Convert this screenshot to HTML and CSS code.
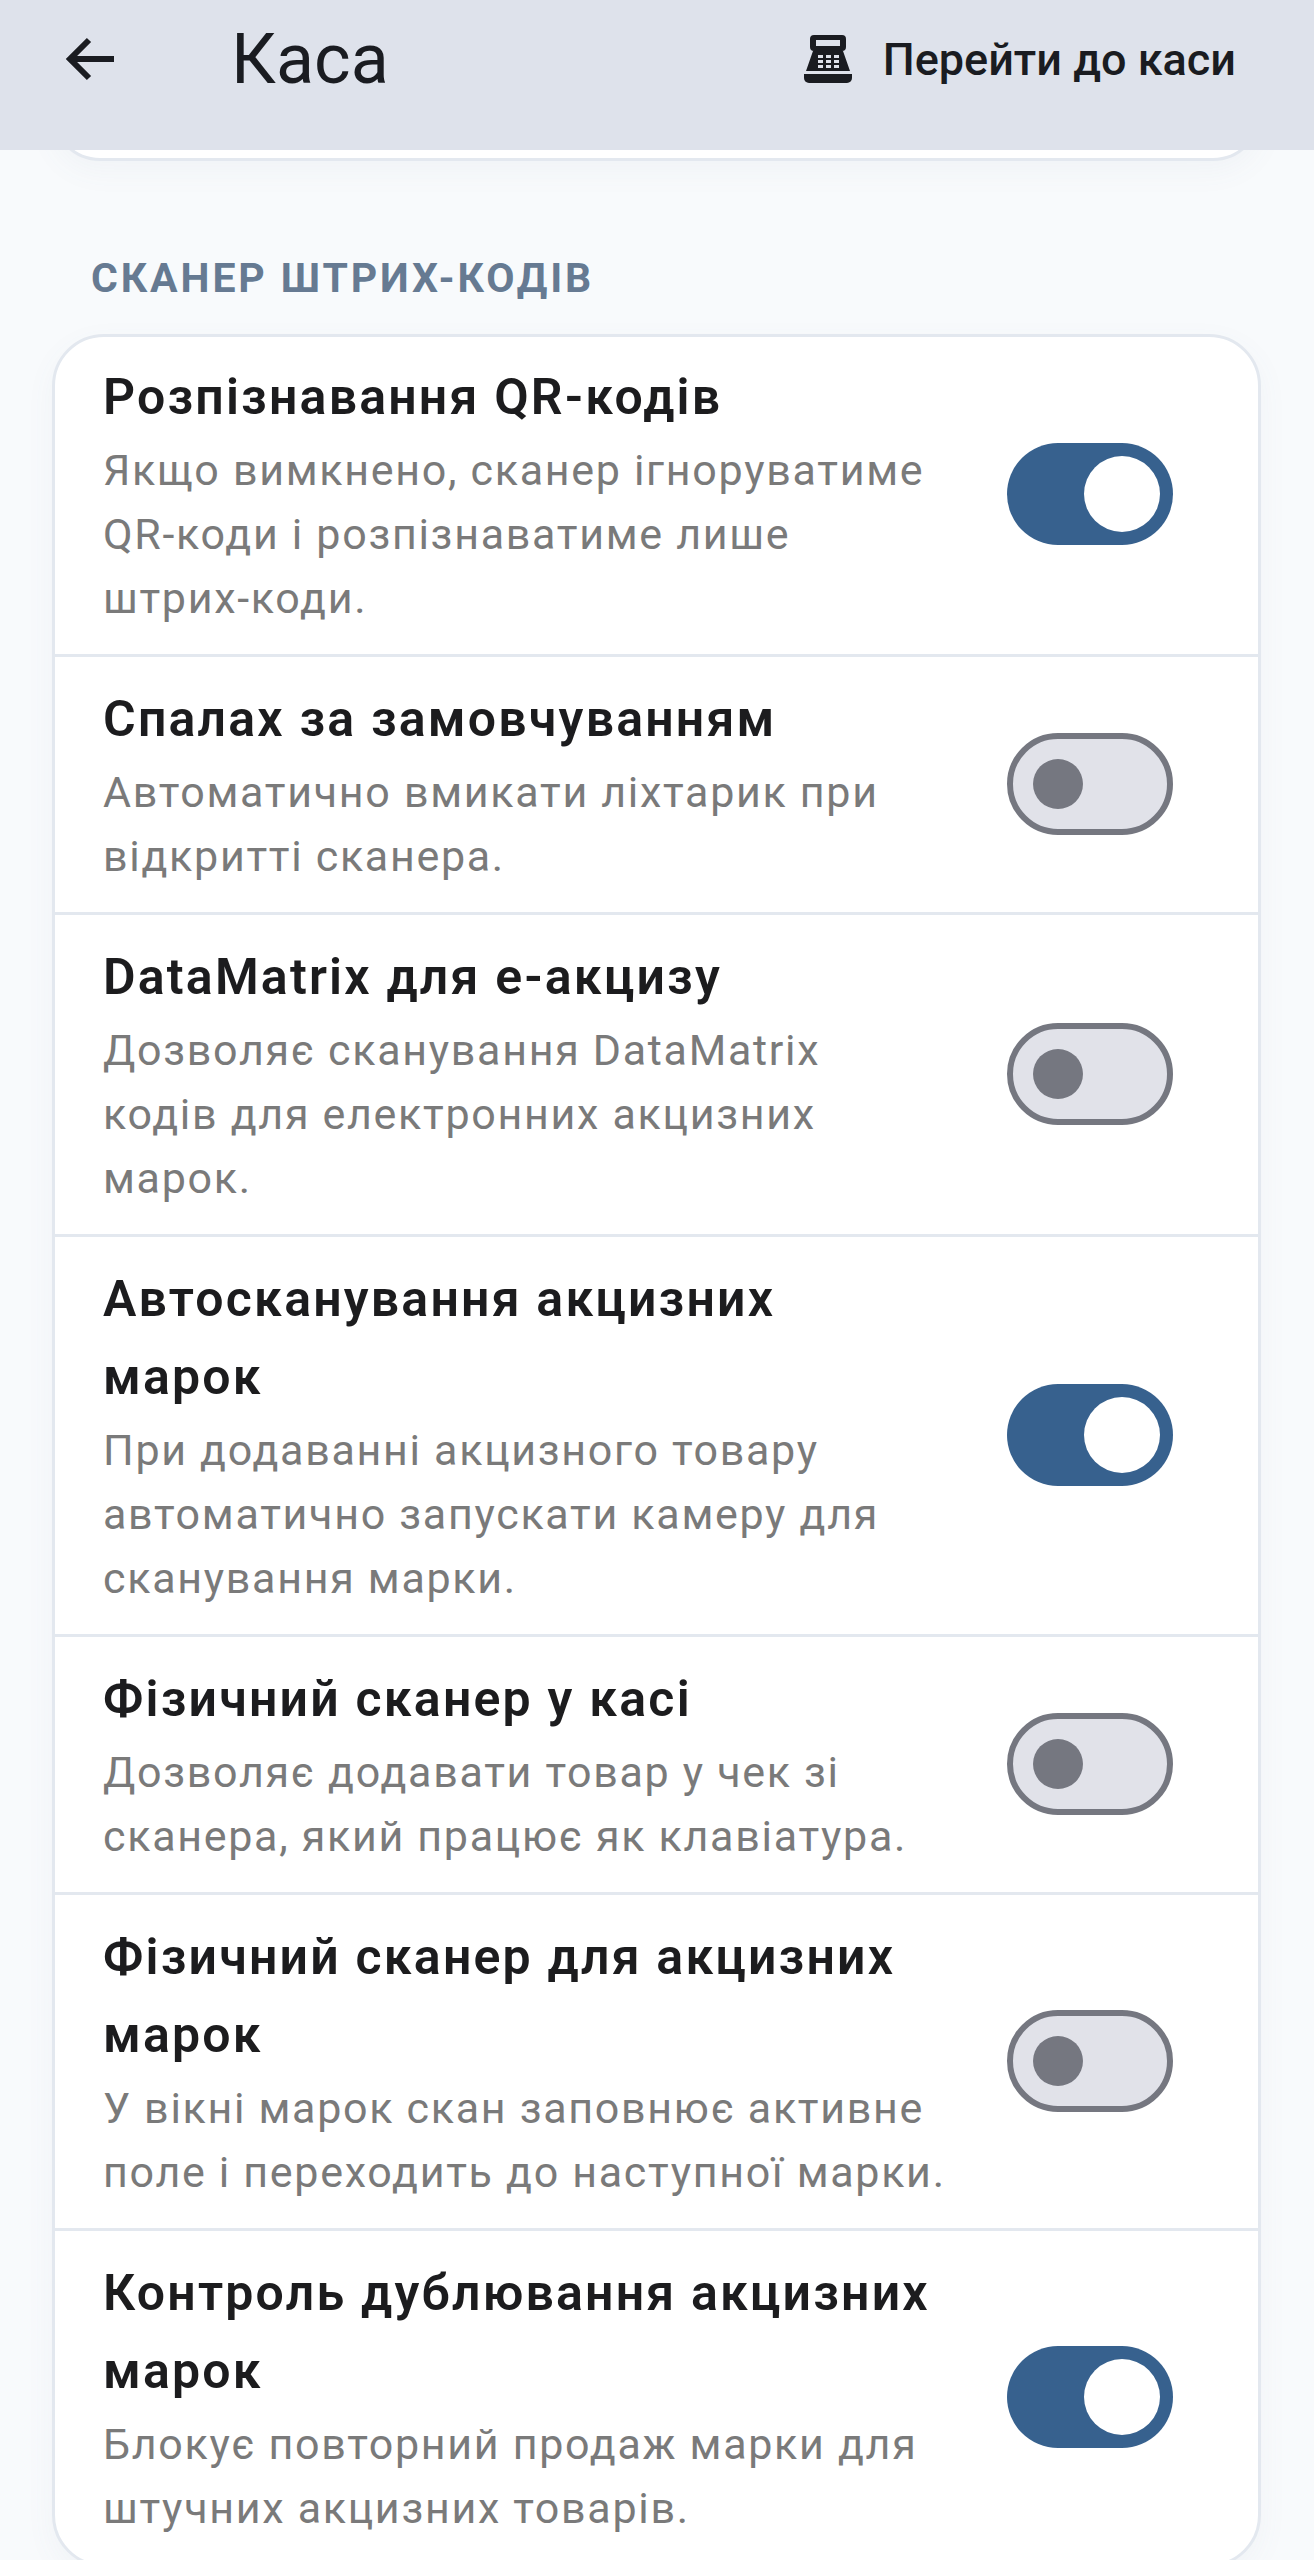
FILE: index.html
```html
<!DOCTYPE html>
<html lang="uk">
<head>
    <meta charset="UTF-8">
    <title>Каса</title>
    <link rel="stylesheet" href="styles.css">
</head>
<body>
    <header class="app-bar">
        <button class="back-btn" aria-label="Назад">
            <svg viewBox="0 0 56 56" width="56" height="56"><path d="M52 28H7M27 9L8 28l19 19" fill="none" stroke="#1a1c21" stroke-width="6"/></svg>
        </button>
        <h1 class="app-title">Каса</h1>
        <div class="app-action">
            <svg class="till-icon" viewBox="0 0 50 50" width="50" height="50">
                <path fill="#1a1c21" fill-rule="evenodd" d="M11 1h28a4 4 0 0 1 4 4v8a4 4 0 0 1-4 4H11a4 4 0 0 1-4-4V5a4 4 0 0 1 4-4zm2 5v6h24V6z"/>
                <path fill="#1a1c21" fill-rule="evenodd" d="M10 17h30l7 20H3zM15 21v3h5v-3zm8 0v3h5v-3zm8 0v3h5v-3zM15 26v3h5v-3zm8 0v3h5v-3zm8 0v3h5v-3zM15 31v3h5v-3zm8 0v3h5v-3zm8 0v3h5v-3z"/>
                <path fill="#1a1c21" d="M1 40h48v4a5 5 0 0 1-5 5H6a5 5 0 0 1-5-5z"/>
            </svg>
            <span>Перейти до каси</span>
        </div>
    </header>

    <main class="content">
        <div class="prev-card"></div>
        <h2 class="section-title">СКАНЕР ШТРИХ-КОДІВ</h2>

        <section class="card">
            <div class="row">
                <div class="row-text">
                    <div class="row-title">Розпізнавання QR-кодів</div>
                    <div class="row-desc">Якщо вимкнено, сканер ігноруватиме QR-коди і розпізнаватиме лише<br>штрих-коди.</div>
                </div>
                <div class="switch on"><span class="thumb"></span></div>
            </div>
            <div class="row">
                <div class="row-text">
                    <div class="row-title">Спалах за замовчуванням</div>
                    <div class="row-desc">Автоматично вмикати ліхтарик при відкритті сканера.</div>
                </div>
                <div class="switch"><span class="thumb"></span></div>
            </div>
            <div class="row">
                <div class="row-text">
                    <div class="row-title">DataMatrix для е-акцизу</div>
                    <div class="row-desc">Дозволяє сканування DataMatrix<br>кодів для електронних акцизних марок.</div>
                </div>
                <div class="switch"><span class="thumb"></span></div>
            </div>
            <div class="row">
                <div class="row-text">
                    <div class="row-title">Автосканування акцизних<br>марок</div>
                    <div class="row-desc">При додаванні акцизного товару автоматично запускати камеру для сканування марки.</div>
                </div>
                <div class="switch on"><span class="thumb"></span></div>
            </div>
            <div class="row">
                <div class="row-text">
                    <div class="row-title">Фізичний сканер у касі</div>
                    <div class="row-desc">Дозволяє додавати товар у чек зі сканера, який працює як клавіатура.</div>
                </div>
                <div class="switch"><span class="thumb"></span></div>
            </div>
            <div class="row">
                <div class="row-text">
                    <div class="row-title">Фізичний сканер для акцизних марок</div>
                    <div class="row-desc">У вікні марок скан заповнює активне<br>поле і переходить до наступної марки.</div>
                </div>
                <div class="switch"><span class="thumb"></span></div>
            </div>
            <div class="row">
                <div class="row-text">
                    <div class="row-title">Контроль дублювання акцизних марок</div>
                    <div class="row-desc">Блокує повторний продаж марки для штучних акцизних товарів.</div>
                </div>
                <div class="switch on"><span class="thumb"></span></div>
            </div>
        </section>
    </main>
</body>
</html>
```

FILE: styles.css
```css
html, body {
    margin: 0;
    padding: 0;
}

body {
    width: 1314px;
    height: 2560px;
    overflow: hidden;
    font-family: Roboto, "Noto Sans", sans-serif;
    background-color: #f8fafc;
    color: #1a1c21;
}

.app-bar {
    position: relative;
    z-index: 1;
    display: flex;
    align-items: center;
    height: 150px;
    padding: 0 78px 32px 62px;
    box-sizing: border-box;
    background-color: #dee2eb;
}

.back-btn {
    display: flex;
    width: 56px;
    height: 56px;
    padding: 0;
    border: none;
    background: none;
}

.app-title {
    margin: 0 0 0 113px;
    font-size: 70px;
    font-weight: 400;
    line-height: 80px;
}

.app-action {
    display: flex;
    align-items: center;
    gap: 30px;
    margin-left: auto;
    font-size: 45px;
    font-weight: 500;
}

.content {
    padding: 0 53px 0 52px;
}

.prev-card {
    height: 90px;
    margin-top: -85px;
    background-color: #fff;
    border: 3px solid #e3e8ef;
    border-radius: 52px;
    box-shadow: 0 10px 30px rgba(100, 116, 139, 0.05);
}

.section-title {
    margin: 93px 0 32px 39px;
    font-size: 41px;
    font-weight: 700;
    line-height: 48px;
    letter-spacing: 2.9px;
    color: #667a92;
}

.card {
    background-color: #fff;
    border: 3px solid #e3e8ef;
    border-radius: 52px;
    overflow: hidden;
    box-shadow: 0 10px 30px rgba(100, 116, 139, 0.05);
}

.row {
    display: flex;
    align-items: center;
    justify-content: space-between;
    padding: 23px 85px 24px 48px;
    border-bottom: 3px solid #e3e8ef;
}

.row:first-child {
    padding-top: 21px;
}

.row:last-child {
    border-bottom: none;
}

.row-text {
    width: 850px;
}

.row-title {
    font-size: 50px;
    font-weight: 600;
    line-height: 78px;
    letter-spacing: 2.2px;
    color: #1c1c1e;
}

.row-desc {
    margin-top: 2px;
    font-size: 43px;
    line-height: 64px;
    letter-spacing: 1.7px;
    color: #7a7a7a;
}

.switch {
    flex: none;
    display: flex;
    align-items: center;
    width: 166px;
    height: 102px;
    padding-left: 20px;
    box-sizing: border-box;
    background-color: #e1e2e9;
    border: 6px solid #757780;
    border-radius: 51px;
}

.switch .thumb {
    width: 50px;
    height: 50px;
    background-color: #757780;
    border-radius: 50%;
}

.switch.on {
    justify-content: flex-end;
    padding: 0 13px;
    background-color: #37618e;
    border: none;
}

.switch.on .thumb {
    width: 76px;
    height: 76px;
    background-color: #fff;
}
```
